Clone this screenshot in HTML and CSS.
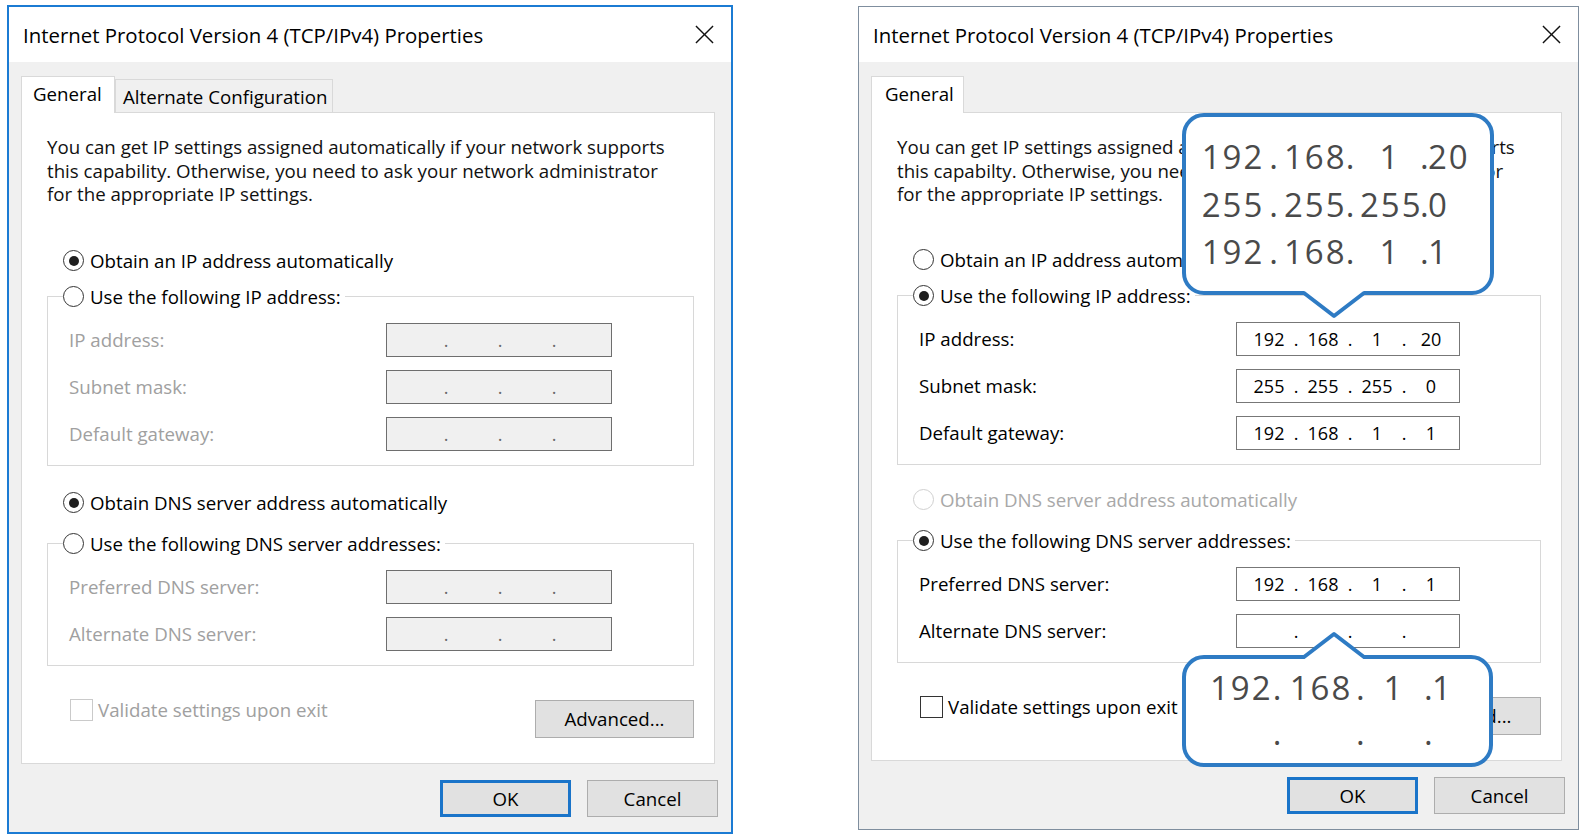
FILE: index.html
```html
<!DOCTYPE html>
<html lang="en">
<head>
  <meta charset="UTF-8" />
  <meta name="viewport" content="width=device-width, initial-scale=1.0" />
  <title>Internet Protocol Version 4 (TCP/IPv4) Properties</title>
  <link rel="stylesheet" href="styles.css">
</head>
<body>
  <div class="page">

    <!-- default state: everything automatic -->
    <div class="dialog">
      <div class="titlebar">
        <span class="title">Internet Protocol Version 4 (TCP/IPv4) Properties</span>
        <svg class="close" viewBox="0 0 20 20"><path d="M1 1L19 19M19 1L1 19" /></svg>
      </div>
      <div class="dlg-body">
        <div class="tabs">
          <div class="tab selected">General</div>
          <div class="tab">Alternate Configuration</div>
        </div>
        <div class="panel">
          <p class="intro">You can get IP settings assigned automatically if your network supports<br>this capability. Otherwise, you need to ask your network administrator<br>for the appropriate IP settings.</p>

          <div class="radio-row first"><span class="radio checked"></span>Obtain an IP address automatically</div>
          <fieldset class="group">
            <legend><span class="radio"></span>Use the following IP address:</legend>
            <div class="field disabled">
              <span class="label">IP address:</span>
              <div class="ipbox"><span></span><span>.</span><span></span><span>.</span><span></span><span>.</span><span></span></div>
            </div>
            <div class="field disabled">
              <span class="label">Subnet mask:</span>
              <div class="ipbox"><span></span><span>.</span><span></span><span>.</span><span></span><span>.</span><span></span></div>
            </div>
            <div class="field disabled">
              <span class="label">Default gateway:</span>
              <div class="ipbox"><span></span><span>.</span><span></span><span>.</span><span></span><span>.</span><span></span></div>
            </div>
          </fieldset>

          <div class="radio-row dns"><span class="radio checked"></span>Obtain DNS server address automatically</div>
          <fieldset class="group dns">
            <legend><span class="radio"></span>Use the following DNS server addresses:</legend>
            <div class="field disabled">
              <span class="label">Preferred DNS server:</span>
              <div class="ipbox"><span></span><span>.</span><span></span><span>.</span><span></span><span>.</span><span></span></div>
            </div>
            <div class="field disabled">
              <span class="label">Alternate DNS server:</span>
              <div class="ipbox"><span></span><span>.</span><span></span><span>.</span><span></span><span>.</span><span></span></div>
            </div>
          </fieldset>

          <div class="panel-foot">
            <label class="check disabled"><span class="box"></span>Validate settings upon exit</label>
            <button class="btn adv">Advanced...</button>
          </div>
        </div>
        <div class="footer">
          <button class="btn default">OK</button>
          <button class="btn">Cancel</button>
        </div>
      </div>
    </div>

    <!-- static addresses filled in -->
    <div class="dialog inactive">
      <div class="titlebar">
        <span class="title">Internet Protocol Version 4 (TCP/IPv4) Properties</span>
        <svg class="close" viewBox="0 0 20 20"><path d="M1 1L19 19M19 1L1 19" /></svg>
      </div>
      <div class="dlg-body">
        <div class="tabs">
          <div class="tab selected">General</div>
        </div>
        <div class="panel">
          <p class="intro">You can get IP settings assigned automatically if your network supports<br>this capabilty. Otherwise, you need to ask your network administrator<br>for the appropriate IP settings.</p>

          <div class="radio-row first"><span class="radio"></span>Obtain an IP address automatically</div>
          <fieldset class="group">
            <legend><span class="radio checked"></span>Use the following IP address:</legend>
            <div class="field">
              <span class="label">IP address:</span>
              <div class="ipbox"><span>192</span><span>.</span><span>168</span><span>.</span><span>1</span><span>.</span><span>20</span></div>
            </div>
            <div class="field">
              <span class="label">Subnet mask:</span>
              <div class="ipbox"><span>255</span><span>.</span><span>255</span><span>.</span><span>255</span><span>.</span><span>0</span></div>
            </div>
            <div class="field">
              <span class="label">Default gateway:</span>
              <div class="ipbox"><span>192</span><span>.</span><span>168</span><span>.</span><span>1</span><span>.</span><span>1</span></div>
            </div>
          </fieldset>

          <div class="radio-row dns disabled"><span class="radio"></span>Obtain DNS server address automatically</div>
          <fieldset class="group dns">
            <legend><span class="radio checked"></span>Use the following DNS server addresses:</legend>
            <div class="field">
              <span class="label">Preferred DNS server:</span>
              <div class="ipbox"><span>192</span><span>.</span><span>168</span><span>.</span><span>1</span><span>.</span><span>1</span></div>
            </div>
            <div class="field">
              <span class="label">Alternate DNS server:</span>
              <div class="ipbox"><span></span><span>.</span><span></span><span>.</span><span></span><span>.</span><span></span></div>
            </div>
          </fieldset>

          <div class="panel-foot">
            <label class="check"><span class="box"></span>Validate settings upon exit</label>
            <button class="btn adv">Advanced...</button>
          </div>
        </div>
        <div class="footer">
          <button class="btn default">OK</button>
          <button class="btn">Cancel</button>
        </div>
      </div>

      <div class="callout callout-top">
        <span>192</span><span>.</span><span>168</span><span>.</span><span>1</span><span>.</span><span>20</span>
        <span>255</span><span>.</span><span>255</span><span>.</span><span>255</span><span>.</span><span>0</span>
        <span>192</span><span>.</span><span>168</span><span>.</span><span>1</span><span>.</span><span>1</span>
        <svg class="pointer" viewBox="0 0 70 34">
          <polygon points="4,6 34,29 64,6 64,0 4,0" />
          <polyline points="4,6 34,29 64,6" />
        </svg>
      </div>

      <div class="callout callout-bottom">
        <span>192</span><span>.</span><span>168</span><span>.</span><span>1</span><span>.</span><span>1</span>
        <span></span><span>.</span><span></span><span>.</span><span></span><span>.</span><span></span>
        <svg class="pointer" viewBox="0 0 70 34">
          <polygon points="4,28 34,5 64,28 64,34 4,34" />
          <polyline points="4,28 34,5 64,28" />
        </svg>
      </div>
    </div>

  </div>
</body>
</html>
```

FILE: styles.css
```css
* { box-sizing: border-box; }
body {
  margin: 0;
  background: #fff;
  font-family: "Open Sans", "Noto Sans", sans-serif;
  font-size: 18.7px;
  color: #000;
}
.page {
  display: flex;
  align-items: flex-start;
  gap: 125px;
  padding: 5px 0 0 7px;
}

/* window */
.dialog {
  position: relative;
  width: 726px;
  background: #f0f0f0;
  border: 2px solid #1b7bd3;
}
.dialog.inactive {
  width: 721px;
  margin-top: 1px;
  border: 1px solid #7f8e9e;
}
.titlebar {
  display: flex;
  align-items: center;
  justify-content: space-between;
  height: 55px;
  padding: 0 17px 0 14px;
  background: #fff;
  font-size: 20.4px;
}
.close {
  width: 19px;
  height: 19px;
  fill: none;
  stroke: #111;
  stroke-width: 1.5;
}
.dlg-body { padding: 14px 16px 15px 12px; }

/* tabs */
.tabs {
  display: flex;
  align-items: flex-end;
  height: 36px;
}
.tab {
  display: flex;
  align-items: center;
  width: 218px;
  height: 33px;
  padding-left: 7px;
  background: #f0f0f0;
  border: 1px solid #d9d9d9;
  border-bottom: none;
}
.tab.selected {
  position: relative;
  z-index: 1;
  width: 94px;
  height: 37px;
  margin-bottom: -1px;
  padding: 0 0 3px 11px;
  background: #fff;
}
.inactive .tab.selected { width: 93px; padding-left: 13px; }

/* tab page */
.panel {
  background: #fff;
  border: 1px solid #d9d9d9;
  padding: 22px 20px 25px 25px;
}
.intro {
  margin: 0;
  line-height: 23.5px;
  color: #111;
}
.radio-row {
  display: flex;
  align-items: center;
  gap: 6px;
  height: 24px;
  margin: 43px 0 0 16px;
}
.radio-row.dns { margin-top: 25px; }
.inactive .radio-row.first { margin-top: 42px; }
.inactive .radio-row.dns { margin-top: 23px; }
.radio-row.disabled { color: #a8a8a8; }
.radio {
  flex: none;
  display: flex;
  align-items: center;
  justify-content: center;
  width: 21px;
  height: 21px;
  border: 1.5px solid #333;
  border-radius: 50%;
  background: #fff;
}
.radio-row.disabled .radio { border-color: #d0d0d0; }
.radio.checked::after {
  content: "";
  width: 10px;
  height: 10px;
  border-radius: 50%;
  background: #1e1e1e;
}

.group {
  min-width: 0;
  margin: 12px 0 0;
  padding: 0 0 14px 15px;
  border: 1px solid #d8d8d8;
}
.group.dns { margin-top: 17px; }
.group legend {
  display: flex;
  align-items: center;
  gap: 6px;
  height: 24px;
  padding: 0 4px 0 0;
}
.field {
  display: flex;
  align-items: center;
  height: 34px;
  margin: 13px 0 0 6px;
}
.group legend + .field { margin-top: 14px; }
.label { width: 317px; }
.field.disabled .label { color: #a0a0a0; }
.ipbox {
  display: grid;
  grid-template-columns: 50px 4px 50px 4px 50px 4px 50px;
  justify-items: center;
  align-items: center;
  width: 226px;
  height: 34px;
  padding-left: 7px;
  border: 1px solid #777;
  background: #fff;
  font-size: 18px;
}
.inactive .ipbox { width: 224px; }
.field.disabled .ipbox {
  background: #f0f0f0;
  border-color: #6e6e6e;
  color: #6a6a6a;
}

.panel-foot {
  display: flex;
  justify-content: space-between;
  align-items: flex-start;
  margin-top: 33px;
}
.check {
  display: flex;
  align-items: center;
  gap: 5px;
  height: 22px;
  margin-left: 23px;
}
.check .box {
  width: 23px;
  height: 22px;
  border: 1.5px solid #333;
  background: #fff;
}
.check.disabled { color: #a0a0a0; }
.check.disabled .box { border-color: #cacaca; }

/* buttons */
.btn {
  padding: 0;
  font: inherit;
  color: #000;
  background: #e1e1e1;
  border: 1px solid #adadad;
}
.btn.adv {
  width: 159px;
  height: 38px;
  margin-top: 1px;
}
.footer {
  display: flex;
  justify-content: flex-end;
  gap: 16px;
  padding-top: 16px;
  margin-right: -3px;
}
.footer .btn {
  width: 131px;
  height: 37px;
}
.btn.default { border: 3px solid #1a74c9; }

/* zoomed-in callouts laid over the second window */
.callout {
  position: absolute;
  z-index: 2;
  left: 323px;
  display: grid;
  background: #fff;
  border: 4px solid #2e7bc4;
  border-radius: 22px;
  font-size: 33px;
  letter-spacing: 2px;
  color: #4a4a4a;
  text-align: center;
}
.callout-top {
  top: 106px;
  width: 312px;
  height: 182px;
  padding: 16px 0 0 15px;
  grid-template-columns: 64px 19px 58px 18px 60px 8px 1fr;
  grid-auto-rows: 47.5px;
  line-height: 47.5px;
}
.callout-bottom {
  top: 648px;
  width: 311px;
  height: 112px;
  padding: 6px 0 0 24px;
  grid-template-columns: 60px 16px 70px 8px 60px 8px 1fr;
  grid-auto-rows: 45px;
  line-height: 45px;
}
.callout span:nth-child(7n) { text-align: left; }
.pointer {
  position: absolute;
  left: 114px;
  width: 70px;
  height: 34px;
}
.callout-top .pointer { top: 170px; }
.callout-bottom .pointer { top: -30px; }
.pointer polygon { fill: #fff; }
.pointer polyline {
  fill: none;
  stroke: #2e7bc4;
  stroke-width: 4;
  stroke-linejoin: round;
  stroke-linecap: round;
}
```
